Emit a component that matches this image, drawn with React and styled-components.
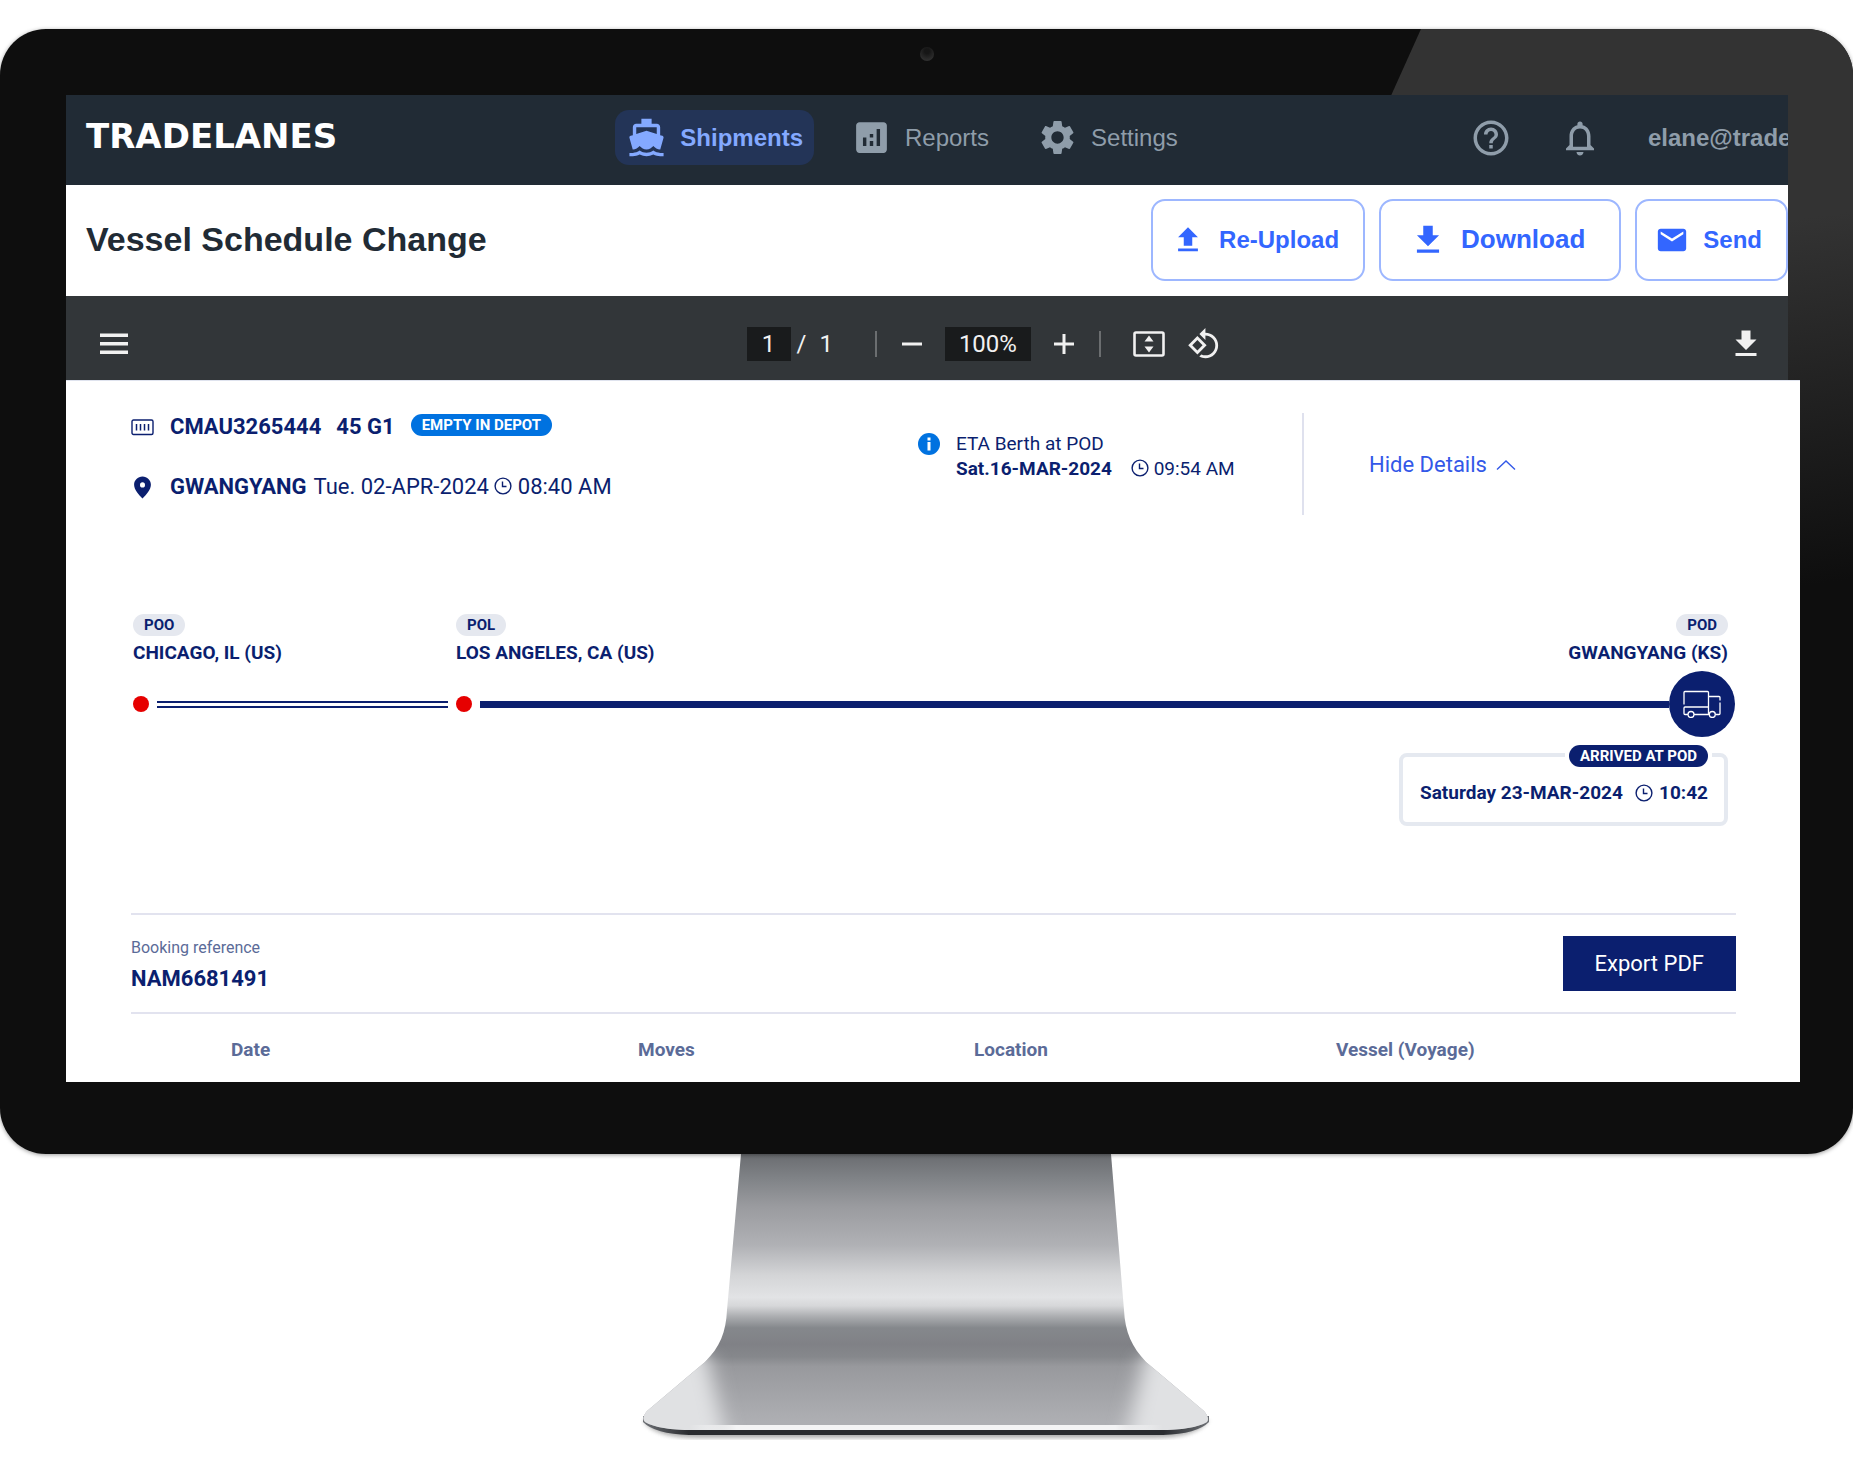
import React, { useState } from 'react';
import styled, { createGlobalStyle } from 'styled-components';
import {
  MdAnalytics,
  MdDirectionsBoat,
  MdEmail,
  MdHelpOutline,
  MdNotificationsNone,
  MdSettings,
} from 'react-icons/md';

const navItems = [
  { label: 'Shipments', icon: MdDirectionsBoat },
  { label: 'Reports', icon: MdAnalytics },
  { label: 'Settings', icon: MdSettings },
];

const UploadIcon = ({ size }) => (
  <svg width={size} height={size} viewBox="0 0 24 24" fill="currentColor" aria-hidden="true">
    <path d="M9 16h6v-6h4l-7-7-7 7h4v6zm-4 2h14v2H5v-2z" />
  </svg>
);

const DownloadIcon = ({ size }) => (
  <svg width={size} height={size} viewBox="0 0 24 24" fill="currentColor" aria-hidden="true">
    <path d="M19 9h-4V3H9v6H5l7 7 7-7zM5 18v2h14v-2H5z" />
  </svg>
);

const MenuIcon = () => (
  <svg width="28" height="22" viewBox="0 0 28 22" fill="currentColor" aria-hidden="true">
    <path d="M0 0.5h28v3.5H0zM0 9h28v3.5H0zM0 17.5h28v3.5H0z" />
  </svg>
);

const MinusIcon = () => (
  <svg width="22" height="22" viewBox="0 0 22 22" fill="currentColor" aria-hidden="true">
    <path d="M1 9.5h20v3H1z" />
  </svg>
);

const PlusIcon = () => (
  <svg width="22" height="22" viewBox="0 0 22 22" fill="currentColor" aria-hidden="true">
    <path d="M9.5 1h3v8.5H21v3h-8.5V21h-3v-8.5H1v-3h8.5z" />
  </svg>
);

const FitIcon = () => (
  <svg width="32" height="28" viewBox="0 0 32 28" aria-hidden="true">
    <rect x="1.5" y="2.5" width="29" height="23" rx="1.5" fill="none" stroke="currentColor" strokeWidth="2.6" />
    <path d="M16 5.5l4.5 6h-9zM16 22.5l4.5-6h-9z" fill="currentColor" />
  </svg>
);

const RotateIcon = () => (
  <svg width="34" height="34" viewBox="0 0 24 24" fill="currentColor" aria-hidden="true">
    <path d="M7.34 6.41L0.86 12.9l6.49 6.48 6.49-6.48-6.5-6.49zM3.69 12.9l3.66-3.66L11 12.9l-3.66 3.66-3.65-3.66zm15.67-6.26C17.61 4.88 15.3 4 13 4V0.76L8.76 5 13 9.24V6c1.79 0 3.58.68 4.95 2.05 2.73 2.73 2.73 7.17 0 9.9C16.58 19.32 14.79 20 13 20c-.97 0-1.94-.21-2.84-.61l-1.49 1.49C10.02 21.62 11.51 22 13 22c2.3 0 4.61-.88 6.36-2.64 3.52-3.51 3.52-9.21 0-12.72z" />
  </svg>
);

const ContainerIcon = () => (
  <svg width="23" height="17" viewBox="0 0 23 17" fill="none" stroke="currentColor" aria-hidden="true">
    <rect x="1" y="1" width="21" height="14.5" rx="1.5" strokeWidth="1.4" />
    <path d="M5.5 5v6.500M9.500 5v6.500M13.500 5v6.500M17.500 5v6.500" strokeWidth="1.500" />
  </svg>
);

const PinIcon = () => (
  <svg width="18" height="23" viewBox="0 0 18 23" aria-hidden="true">
    <path
      fillRule="evenodd"
      fill="currentColor"
      d="M9 0.500C4.300 0.500 0.600 4.200 0.600 8.800c0 4.900 4.600 9.900 8.400 13.700 3.800-3.800 8.400-8.800 8.400-13.700C17.400 4.200 13.700 0.500 9 0.500zM9 6.200a2.500 2.700 0 1 1 0 5.400 2.500 2.700 0 1 1 0-5.400z"
    />
  </svg>
);

const ClockIcon = () => (
  <svg width="18" height="18" viewBox="0 0 18 18" fill="none" stroke="currentColor" aria-hidden="true">
    <circle cx="9" cy="9" r="7.9" strokeWidth="1.4" />
    <path d="M8.5 4.5v5h4" strokeWidth="1.4" />
  </svg>
);

const InfoIcon = () => (
  <svg width="22" height="22" viewBox="0 0 22 22" aria-hidden="true">
    <circle cx="11" cy="11" r="11" fill="#0072e0" />
    <path d="M9.5 9h3v8.5h-3zM9.5 4.500h3v3h-3z" fill="#fff" />
  </svg>
);

const ChevronIcon = () => (
  <svg width="20" height="12" viewBox="0 0 20 12" fill="none" stroke="currentColor" aria-hidden="true">
    <path d="M1 10.5l9-8.5 9 8.5" strokeWidth="1.4" />
  </svg>
);

const TruckIcon = () => (
  <svg width="38" height="28" viewBox="0 0 38 28" fill="none" stroke="#fff" strokeWidth="1.3" aria-hidden="true">
    <path d="M1 14.5V2.5q0-1 1-1h22.5q1 0 1 1V24.5" />
    <path d="M25.5 6.5h10.500q1 0 1 1v3" />
    <path d="M37 12.5v11q0 1-1 1h-3.5M26 24.5H11M5 24.5H2q-1 0-1-1v-5.5q0-1 1-1h23" />
    <circle cx="8" cy="24.5" r="3" />
    <circle cx="29.3" cy="24.5" r="3" />
  </svg>
);

const Stand = () => (
  <StandSvg viewBox="2 0 572 290" aria-hidden="true">
    <defs>
      <linearGradient id="metal" gradientUnits="userSpaceOnUse" x1="0" y1="0" x2="0" y2="276">
        <stop offset="0" stopColor="#6a6c70" />
        <stop offset="0.09" stopColor="#808387" />
        <stop offset="0.19" stopColor="#9a9b9f" />
        <stop offset="0.33" stopColor="#b0b1b5" />
        <stop offset="0.44" stopColor="#d4d5d7" />
        <stop offset="0.52" stopColor="#e2e3e5" />
        <stop offset="0.55" stopColor="#d6d7d9" />
        <stop offset="0.59" stopColor="#aaacaf" />
        <stop offset="0.63" stopColor="#85888c" />
        <stop offset="0.69" stopColor="#808186" />
        <stop offset="0.735" stopColor="#86888c" />
        <stop offset="0.77" stopColor="#98999d" />
        <stop offset="0.97" stopColor="#aeafb3" />
      </linearGradient>
      <linearGradient id="lip" x1="0" y1="0" x2="1" y2="0">
        <stop offset="0" stopColor="#6d7075" />
        <stop offset="0.08" stopColor="#2a2c30" />
        <stop offset="0.92" stopColor="#2a2c30" />
        <stop offset="1" stopColor="#6d7075" />
      </linearGradient>
      <linearGradient id="edge" x1="0" y1="0" x2="1" y2="0">
        <stop offset="0" stopColor="#fff" stopOpacity="0" />
        <stop offset="0.1" stopColor="#f4f4f5" />
        <stop offset="0.9" stopColor="#f4f4f5" />
        <stop offset="1" stopColor="#fff" stopOpacity="0" />
      </linearGradient>
      <filter id="soft" x="-50%" y="-20%" width="200%" height="140%">
        <feGaussianBlur stdDeviation="10 6" />
      </filter>
      <filter id="ground" x="-10%" y="-10%" width="120%" height="120%">
        <feGaussianBlur stdDeviation="2" />
      </filter>
      <clipPath id="body">
        <path d="M102 0H472L485 156C486 178 493 193 507 208L565 257Q571 264 568 268Q554 276 520 276H54Q20 276 6 268Q2 264 8 257L66 208C81 193 87 178 88 156Z" />
      </clipPath>
    </defs>
    <path d="M4 266Q14 284 60 284H514Q558 284 570 266Z" fill="#777" filter="url(#ground)" opacity="0.6" />
    <path d="M4 262V268Q16 280 50 281H524Q558 280 570 268V262Z" fill="url(#lip)" />
    <g clipPath="url(#body)">
      <path d="M0 0H572V276H0z" fill="url(#metal)" />
      <path d="M68 200L90 300H-30V200z" fill="#e0e1e3" filter="url(#soft)" />
      <path d="M506 200L484 300H604V200z" fill="#e0e1e3" filter="url(#soft)" />
      <path d="M50 271H524V277H50z" fill="url(#edge)" />
    </g>
  </StandSvg>
);

const App = () => {
  const [active, setActive] = useState('Shipments');
  const [page, setPage] = useState('1');
  const [zoom, setZoom] = useState('100%');

  return (
    <Page>
      <GlobalStyle />
      <Monitor>
        <Gloss viewBox="0 0 462 600" preserveAspectRatio="none" aria-hidden="true">
          <defs>
            <linearGradient id="gloss" x1="0.3" y1="0" x2="0.45" y2="1">
              <stop offset="0" stopColor="#333333" />
              <stop offset="0.4" stopColor="#333333" />
              <stop offset="1" stopColor="#0e0e0e" />
            </linearGradient>
          </defs>
          <path d="M30 0H462V600H-240z" fill="url(#gloss)" />
        </Gloss>
        <Camera />
        <Screen>
          <Browser>
            <Header>
              <Logo href="#">TRADELANES</Logo>
              <Nav>
                {navItems.map(({ label, icon: Icon }) => (
                  <NavLink
                    key={label}
                    href={`#${label.toLowerCase()}`}
                    $active={active === label}
                    onClick={() => setActive(label)}
                  >
                    <Icon size={41} />
                    {label}
                  </NavLink>
                ))}
              </Nav>
              <Account>
                <IconButton aria-label="Help">
                  <MdHelpOutline size={42} />
                </IconButton>
                <IconButton aria-label="Notifications">
                  <MdNotificationsNone size={42} />
                </IconButton>
                <Email>elane@trade</Email>
              </Account>
            </Header>
            <TitleBar>
              <Title>Vessel Schedule Change</Title>
              <Actions>
                <ActionButton>
                  <UploadIcon size={34} />
                  Re-Upload
                </ActionButton>
                <ActionButton $large>
                  <DownloadIcon size={38} />
                  Download
                </ActionButton>
                <ActionButton>
                  <MdEmail size={34} />
                  Send
                </ActionButton>
              </Actions>
            </TitleBar>
            <Toolbar>
              <ToolStart>
                <IconButton aria-label="Menu">
                  <MenuIcon />
                </IconButton>
              </ToolStart>
              <ToolGroup>
                <PageInput aria-label="Page" value={page} onChange={(e) => setPage(e.target.value)} />
                <PageCount>
                  <span>/</span>
                  <span>1</span>
                </PageCount>
                <Separator />
                <IconButton aria-label="Zoom out">
                  <MinusIcon />
                </IconButton>
                <ZoomInput aria-label="Zoom" value={zoom} onChange={(e) => setZoom(e.target.value)} />
                <IconButton aria-label="Zoom in">
                  <PlusIcon />
                </IconButton>
                <Separator />
                <ViewTools>
                  <IconButton aria-label="Fit to page">
                    <FitIcon />
                  </IconButton>
                  <IconButton aria-label="Rotate">
                    <RotateIcon />
                  </IconButton>
                </ViewTools>
              </ToolGroup>
              <ToolEnd>
                <IconButton aria-label="Download file">
                  <DownloadIcon size={36} />
                </IconButton>
              </ToolEnd>
            </Toolbar>
          </Browser>

          <Report>
            <Summary>
              <Container>
                <SummaryRow>
                  <ContainerIcon />
                  <strong>CMAU3265444</strong>
                  <Kind>45 G1</Kind>
                  <Badge $tone="blue">EMPTY IN DEPOT</Badge>
                </SummaryRow>
                <SummaryRow>
                  <PinIcon />
                  <strong>GWANGYANG</strong>
                  <When>
                    Tue. 02-APR-2024 <ClockIcon /> 08:40 AM
                  </When>
                </SummaryRow>
              </Container>
              <Eta>
                <InfoIcon />
                <div>
                  <EtaLine>ETA Berth at POD</EtaLine>
                  <EtaLine>
                    <strong>Sat.16-MAR-2024</strong>
                    <EtaTime>
                      <ClockIcon /> 09:54 AM
                    </EtaTime>
                  </EtaLine>
                </div>
              </Eta>
              <Details>
                <DetailsButton>
                  Hide Details
                  <ChevronIcon />
                </DetailsButton>
              </Details>
            </Summary>

            <Route>
              <FirstLeg>
                <Stop>
                  <Badge>POO</Badge>
                  <Place>CHICAGO, IL (US)</Place>
                </Stop>
                <Track>
                  <Dot />
                  <DoubleLine />
                </Track>
              </FirstLeg>
              <MainLeg>
                <Stops>
                  <Stop>
                    <Badge>POL</Badge>
                    <Place>LOS ANGELES, CA (US)</Place>
                  </Stop>
                  <Stop $end>
                    <Badge>POD</Badge>
                    <Place>GWANGYANG (KS)</Place>
                  </Stop>
                </Stops>
                <Track>
                  <Dot />
                  <SolidLine />
                  <TruckStop>
                    <TruckIcon />
                  </TruckStop>
                </Track>
              </MainLeg>
            </Route>

            <Arrival>
              <ArrivalLabel>
                <Badge $tone="navy">ARRIVED AT POD</Badge>
              </ArrivalLabel>
              <span>Saturday 23-MAR-2024</span>
              <ArrivalTime>
                <ClockIcon />
                10:42
              </ArrivalTime>
            </Arrival>

            <Booking>
              <div>
                <BookingLabel>Booking reference</BookingLabel>
                <BookingNumber>NAM6681491</BookingNumber>
              </div>
              <ExportButton>Export PDF</ExportButton>
            </Booking>

            <MovesTable>
              <thead>
                <tr>
                  <Th $width="407px">Date</Th>
                  <Th $width="336px">Moves</Th>
                  <Th $width="362px">Location</Th>
                  <Th>Vessel (Voyage)</Th>
                </tr>
              </thead>
            </MovesTable>
          </Report>
        </Screen>
      </Monitor>
      <Stand />
    </Page>
  );
};

const GlobalStyle = createGlobalStyle`
  * {
    box-sizing: border-box;
  }

  body {
    margin: 0;
    background: #ffffff;
  }

  button,
  input {
    font: inherit;
    color: inherit;
  }
`;

const Page = styled.div`
  padding-top: 29px;
  font-family: 'Liberation Sans', Arial, sans-serif;
`;

const Monitor = styled.main`
  position: relative;
  padding: 66px 53px 72px 66px;
  background: #0e0e0e;
  border-radius: 46px;
  overflow: hidden;
  box-shadow: 0 1px 4px rgba(0, 0, 0, 0.4);
`;

/* reflection over the top right corner of the bezel */
const Gloss = styled.svg`
  position: absolute;
  top: 0;
  right: 0;
  width: 462px;
  height: 600px;
`;

const Camera = styled.div`
  position: absolute;
  top: 18px;
  left: 50%;
  width: 14px;
  height: 14px;
  margin-left: -7px;
  border-radius: 50%;
  background: radial-gradient(circle at 50% 30%, #161616 20%, #3a3a3a 100%);
`;

const Screen = styled.div`
  position: relative;
`;

const Browser = styled.div`
  margin-right: 12px;
  overflow: hidden;
`;

const Header = styled.header`
  display: grid;
  grid-template-columns: minmax(0, 11fr) auto minmax(0, 12fr);
  align-items: center;
  height: 90px;
  padding-bottom: 5px;
  background: #212b35;
  color: #8f9daa;
  font-size: 24px;
`;

const Logo = styled.a`
  padding: 0 0 4px 20px;
  color: #ffffff;
  font-family: 'DejaVu Sans', Verdana, sans-serif;
  font-size: 34px;
  font-weight: 700;
  line-height: 36px;
  text-decoration: none;
`;

const Nav = styled.nav`
  display: flex;
  gap: 26px;
`;

const NavLink = styled.a`
  display: flex;
  align-items: center;
  gap: 13px;
  height: 55px;
  padding: 0 11px;
  border-radius: 14px;
  background: ${(props) => (props.$active ? '#233457' : 'transparent')};
  color: ${(props) => (props.$active ? '#84a9ff' : 'inherit')};
  font-weight: ${(props) => (props.$active ? 700 : 400)};
  text-decoration: none;
`;

const Account = styled.div`
  display: flex;
  align-items: center;
  justify-content: flex-start;
  gap: 47px;
  width: 318px;
  margin-left: auto;
`;

const IconButton = styled.button`
  display: flex;
  padding: 0;
  border: none;
  background: none;
  cursor: pointer;
`;

const Email = styled.span`
  font-weight: 700;
`;

const TitleBar = styled.div`
  display: flex;
  align-items: center;
  justify-content: space-between;
  height: 111px;
  padding: 0 0 2px 20px;
  background: #ffffff;
`;

const Title = styled.h1`
  margin: 0;
  color: #212b35;
  font-size: 34px;
`;

const Actions = styled.div`
  display: flex;
  gap: 14px;
`;

const ActionButton = styled.button`
  display: flex;
  align-items: center;
  gap: 14px;
  height: 82px;
  padding: ${(props) => (props.$large ? '0 34px 0 28px' : '0 24px 0 18px')};
  border: 2px solid #9db7ff;
  border-radius: 14px;
  background: #ffffff;
  color: #3366ff;
  font-size: ${(props) => (props.$large ? '26px' : '24px')};
  font-weight: 700;
  cursor: pointer;
`;

const Toolbar = styled.div`
  display: grid;
  grid-template-columns: 6fr auto 5fr;
  align-items: center;
  height: 84px;
  padding-top: 12px;
  background: #323639;
  color: #f1f1f1;
  font-family: Roboto, sans-serif;
  font-size: 24px;
`;

const ToolStart = styled.div`
  padding-left: 34px;
`;

const ToolGroup = styled.div`
  display: flex;
  align-items: center;
`;

const ToolEnd = styled.div`
  display: flex;
  justify-content: flex-end;
  padding-right: 24px;
`;

const PageInput = styled.input`
  width: 44px;
  height: 34px;
  padding: 0;
  border: none;
  background: #191b1c;
  text-align: center;
`;

const ZoomInput = styled(PageInput)`
  width: 86px;
  margin: 0 22px;
`;

const PageCount = styled.span`
  display: flex;
  gap: 13px;
  margin-left: 6px;
`;

const Separator = styled.span`
  width: 2px;
  height: 26px;
  margin: 0 24px 0 42px;
  background: #6b6e70;

  ${IconButton} + & {
    margin: 0 32px 0 24px;
  }
`;

const ViewTools = styled.div`
  display: flex;
  align-items: center;
  gap: 22px;
`;

const Report = styled.section`
  padding: 32px 64px 0 65px;
  border-top: 1px solid #dfe3ee;
  background: #ffffff;
  color: #0b1f6f;
  font-family: Roboto, sans-serif;
  font-size: 19px;
  line-height: 24px;
`;

const Summary = styled.div`
  display: flex;
  height: 102px;
`;

const Container = styled.div`
  flex: 1;
  font-size: 22px;
`;

const Badge = styled.span`
  display: inline-block;
  height: 22px;
  padding: 0 11px;
  border-radius: 11px;
  background: ${(props) => ({ blue: '#0072e0', navy: '#0b1f6f' })[props.$tone] || '#e5e8ef'};
  color: ${(props) => (props.$tone ? '#ffffff' : '#0b1f6f')};
  font-size: 15px;
  font-weight: 700;
  line-height: 22px;
`;

const SummaryRow = styled.div`
  display: flex;
  align-items: center;
  height: 28px;

  & + & {
    margin-top: 32px;
  }

  > svg {
    width: 23px;
    margin-right: 16px;
  }

  ${Badge} {
    margin-bottom: 4px;
  }
`;

const Kind = styled.strong`
  margin: 0 16px 0 15px;
`;

const When = styled.span`
  margin-left: 7px;

  svg {
    vertical-align: -1px;
  }
`;

const Eta = styled.div`
  display: flex;
  gap: 16px;
  width: 386px;
  padding-top: 18px;
  border-right: 2px solid #dfe1ee;

  > svg {
    margin-top: 2px;
  }
`;

const EtaLine = styled.div`
  display: flex;
  gap: 19px;
  line-height: 25px;
`;

const EtaTime = styled.span`
  svg {
    vertical-align: -2px;
  }
`;

const Details = styled.div`
  display: flex;
  align-items: center;
  width: 432px;
  padding: 2px 0 0 65px;
`;

const DetailsButton = styled.button`
  display: flex;
  align-items: center;
  gap: 9px;
  padding: 0;
  border: none;
  background: none;
  color: #3358e8;
  font-size: 22px;
  cursor: pointer;
`;

const Route = styled.div`
  display: flex;
  margin-top: 99px;
  padding-left: 2px;
`;

const FirstLeg = styled.div`
  width: 323px;
`;

const MainLeg = styled.div`
  flex: 1;
  padding-right: 1px;
`;

const Stops = styled.div`
  display: flex;
  justify-content: space-between;
  padding-right: 7px;
`;

const Stop = styled.div`
  display: flex;
  flex-direction: column;
  align-items: ${(props) => (props.$end ? 'flex-end' : 'flex-start')};
  gap: 5px;
`;

const Place = styled.strong`
  line-height: 24px;
`;

const Track = styled.div`
  display: flex;
  align-items: center;
  height: 66px;
  margin-top: 6px;
`;

const Dot = styled.span`
  flex: none;
  width: 16px;
  height: 16px;
  border-radius: 50%;
  background: #e60000;
`;

const DoubleLine = styled.span`
  flex: 1;
  height: 7px;
  margin: 0 8px;
  border-top: 2px solid #0b1f6f;
  border-bottom: 2px solid #0b1f6f;
`;

const SolidLine = styled.span`
  flex: 1;
  height: 7px;
  margin-left: 8px;
  background: #0b1f6f;
`;

const TruckStop = styled.span`
  display: flex;
  align-items: center;
  justify-content: center;
  width: 66px;
  height: 66px;
  border-radius: 50%;
  background: #0b1f6f;
`;

const Arrival = styled.div`
  position: relative;
  display: flex;
  align-items: center;
  justify-content: space-between;
  width: 329px;
  height: 73px;
  margin: 16px 8px 0 auto;
  padding: 6px 16px 0 17px;
  border: 4px solid #e5e9f0;
  border-radius: 8px;
  font-weight: 700;
`;

const ArrivalLabel = styled.div`
  position: absolute;
  top: -12px;
  right: 12px;
  display: flex;
  padding: 0 4px;
  background: #ffffff;
`;

const ArrivalTime = styled.span`
  display: flex;
  align-items: center;
  gap: 6px;
`;

const Booking = styled.div`
  display: flex;
  justify-content: space-between;
  margin-top: 87px;
  padding: 21px 0;
  border-top: 2px solid #e2e3ef;
  border-bottom: 2px solid #e2e3ef;
`;

const BookingLabel = styled.div`
  color: #5b6b98;
  font-size: 16px;
  line-height: 24px;
`;

const BookingNumber = styled.div`
  margin-top: 7px;
  font-size: 22px;
  font-weight: 700;
`;

const ExportButton = styled.button`
  height: 55px;
  padding: 0 32px;
  border: none;
  background: #0b1f6f;
  color: #ffffff;
  font-size: 22px;
  cursor: pointer;
`;

const MovesTable = styled.table`
  width: 100%;
  border-collapse: collapse;
  table-layout: fixed;
`;

const Th = styled.th`
  width: ${(props) => props.$width || 'auto'};
  height: 68px;
  padding: 4px 0 0 100px;
  color: #5b6b98;
  text-align: left;
`;

const StandSvg = styled.svg`
  display: block;
  width: 572px;
  max-width: 100%;
  margin: 0 auto 25px;
`;

export default App;
